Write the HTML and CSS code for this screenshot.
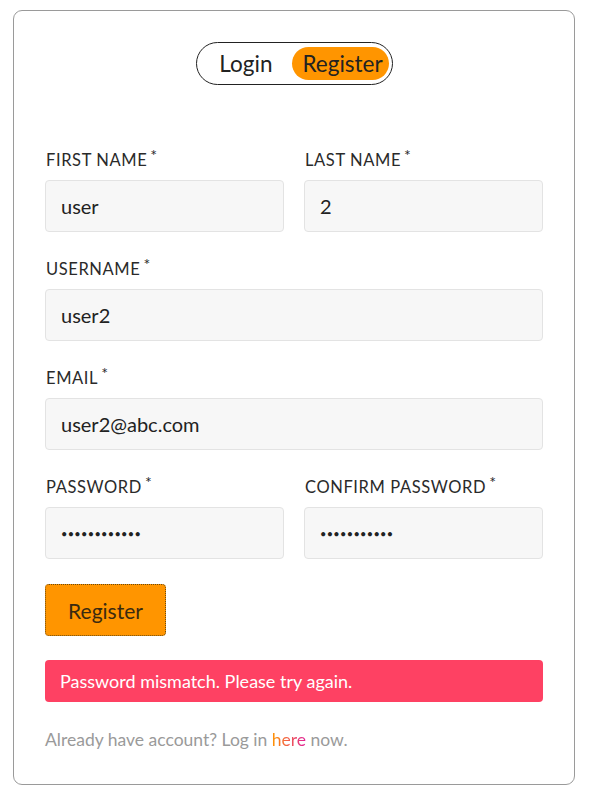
FILE: index.html
```html
<!DOCTYPE html>
<html lang="en">
<head>
<meta charset="utf-8">
<title>Register</title>
<link rel="stylesheet" href="styles.css">
</head>
<body>
<div class="card">
  <div class="toggle-wrap">
    <div class="toggle">
      <span class="tab">Login</span>
      <span class="tab active">Register</span>
    </div>
  </div>
  <form class="form">
    <div class="row two">
      <div class="field">
        <label class="label">FIRST NAME<sup class="req">*</sup></label>
        <div class="input">user</div>
      </div>
      <div class="field">
        <label class="label">LAST NAME<sup class="req">*</sup></label>
        <div class="input">2</div>
      </div>
    </div>
    <div class="row">
      <div class="field">
        <label class="label">USERNAME<sup class="req">*</sup></label>
        <div class="input">user2</div>
      </div>
    </div>
    <div class="row">
      <div class="field">
        <label class="label">EMAIL<sup class="req">*</sup></label>
        <div class="input">user2@abc.com</div>
      </div>
    </div>
    <div class="row two">
      <div class="field">
        <label class="label">PASSWORD<sup class="req">*</sup></label>
        <div class="input dots">••••••••••••</div>
      </div>
      <div class="field">
        <label class="label">CONFIRM PASSWORD<sup class="req">*</sup></label>
        <div class="input dots">•••••••••••</div>
      </div>
    </div>
    <div class="actions">
      <button type="button" class="btn">Register</button>
    </div>
    <div class="error">Password mismatch. Please try again.</div>
    <p class="footer">Already have account? Log in <span class="here">here</span> now.</p>
  </form>
</div>
</body>
</html>
```
FILE: styles.css
```css
html, body {
  margin: 0;
  padding: 0;
  background: #ffffff;
}
body {
  font-family: "Lato", "Noto Sans", sans-serif;
  color: #222;
}
.card {
  margin: 10px 14px 0 13px;
  height: 775px;
  box-sizing: border-box;
  border: 1px solid #9a9a9a;
  border-radius: 9px;
  padding: 31px 31px 0 31px;
}
.toggle-wrap {
  display: flex;
  justify-content: center;
}
.toggle {
  display: flex;
  align-items: center;
  height: 43px;
  box-sizing: border-box;
  border: 1px solid #222;
  border-radius: 22px;
  padding: 0 3px 0 12px;
  gap: 10px;
  margin-left: 1px;
}
.tab {
  font-size: 22.5px;
  line-height: 33px;
  padding: 0 10px;
  border-radius: 17px;
  color: #222;
}
.tab.active {
  background: #ff9500;
  padding: 0 6px 0 10px;
}
.form {
  margin-top: 65px;
  display: flex;
  flex-direction: column;
}
.row {
  display: flex;
  gap: 20px;
  margin-bottom: 27px;
}
.field {
  flex: 1;
  display: flex;
  flex-direction: column;
}
.label {
  font-size: 16.5px;
  letter-spacing: 0.6px;
  line-height: 20px;
  color: #2a2a2a;
  margin-bottom: 10px;
  padding-left: 1px;
}
.req {
  font-size: 16px;
  vertical-align: top;
  line-height: 14px;
  margin-left: 3px;
  position: relative;
  top: -2px;
}
.input {
  height: 52px;
  box-sizing: border-box;
  background: #f7f7f7;
  border: 1px solid #e3e3e3;
  border-radius: 4px;
  padding: 0 15px;
  display: flex;
  align-items: center;
  font-size: 20px;
  color: #222;
}
.input.dots {
  font-size: 11px;
  letter-spacing: 0.3px;
}
.actions {
  margin-top: -2px;
}
.btn {
  font-family: inherit;
  height: 52px;
  width: 121px;
  background: #ff9500;
  border: 1px dotted #6a4a10;
  border-radius: 4px;
  font-size: 21px;
  color: #3a2a10;
  cursor: pointer;
}
.error {
  margin-top: 24px;
  height: 42px;
  background: #fe4163;
  color: #fff;
  border-radius: 4px;
  display: flex;
  align-items: center;
  padding-left: 15px;
  font-size: 18px;
}
.footer {
  margin: 27px 0 0 0;
  font-size: 17.5px;
  color: #9a9a9a;
}
.here {
  background: linear-gradient(90deg, #ff9500, #e0209a);
  -webkit-background-clip: text;
  background-clip: text;
  color: transparent;
}
```
